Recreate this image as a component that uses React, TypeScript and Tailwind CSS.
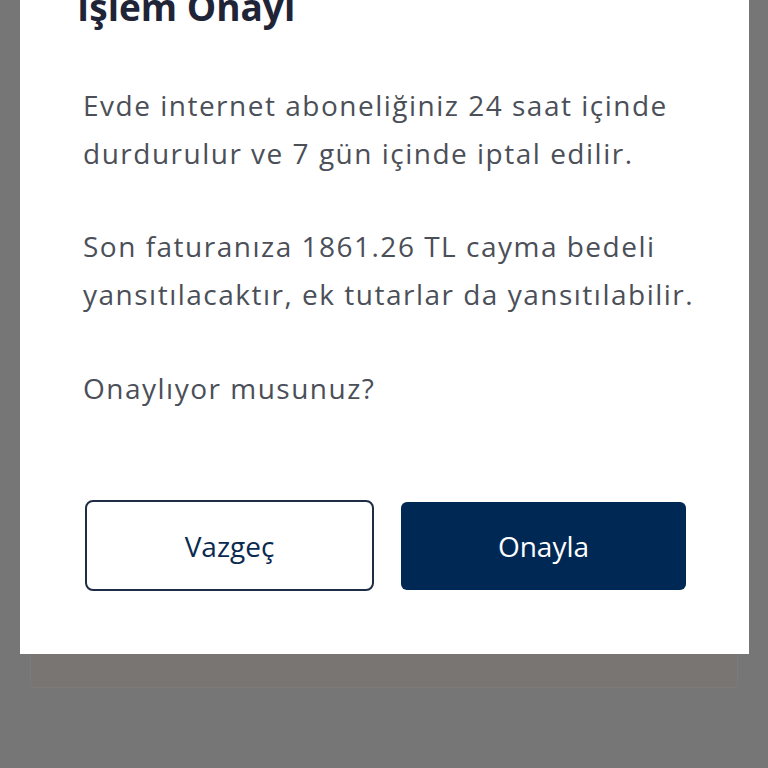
export default function App() {
  const font = { fontFamily: "'Open Sans', 'Noto Sans', sans-serif" };
  return (
    <div className="w-[768px] h-[768px] overflow-hidden bg-[#767676]" style={font}>
      <div className="ml-[20px] w-[729px] h-[654px] bg-white flex flex-col">
        <h1 className="ml-[57px] mt-[-13px] text-[37px] leading-[40px] font-bold text-[#1f2437]">İşlem Onayı</h1>
        <div className="ml-[63px] mt-[54px] text-[28px] leading-[48px] text-[#4b4f58] tracking-[1.5px]">
          <p>Evde internet aboneliğiniz 24 saat içinde<br />durdurulur ve 7 gün içinde iptal edilir.</p>
          <p className="mt-[45px]">Son faturanıza 1861.26 TL cayma bedeli<br />yansıtılacaktır, ek tutarlar da yansıtılabilir.</p>
          <p className="mt-[46px]">Onaylıyor musunuz?</p>
        </div>
        <div className="ml-[65px] mt-[88px] flex items-center gap-[27px]">
          <button className="w-[289px] h-[91px] rounded-[8px] border-2 border-[#1e2d45] bg-white text-[28px] font-medium text-[#0b2a50]">Vazgeç</button>
          <button className="w-[285px] h-[88px] rounded-[6px] bg-[#002855] text-[28px] font-medium text-white">Onayla</button>
        </div>
      </div>
      <div className="ml-[30px] w-[708px] h-[34px] bg-[#787572] border-x border-b border-[#7d7b78] rounded-b-[4px]" />
    </div>
  );
}
